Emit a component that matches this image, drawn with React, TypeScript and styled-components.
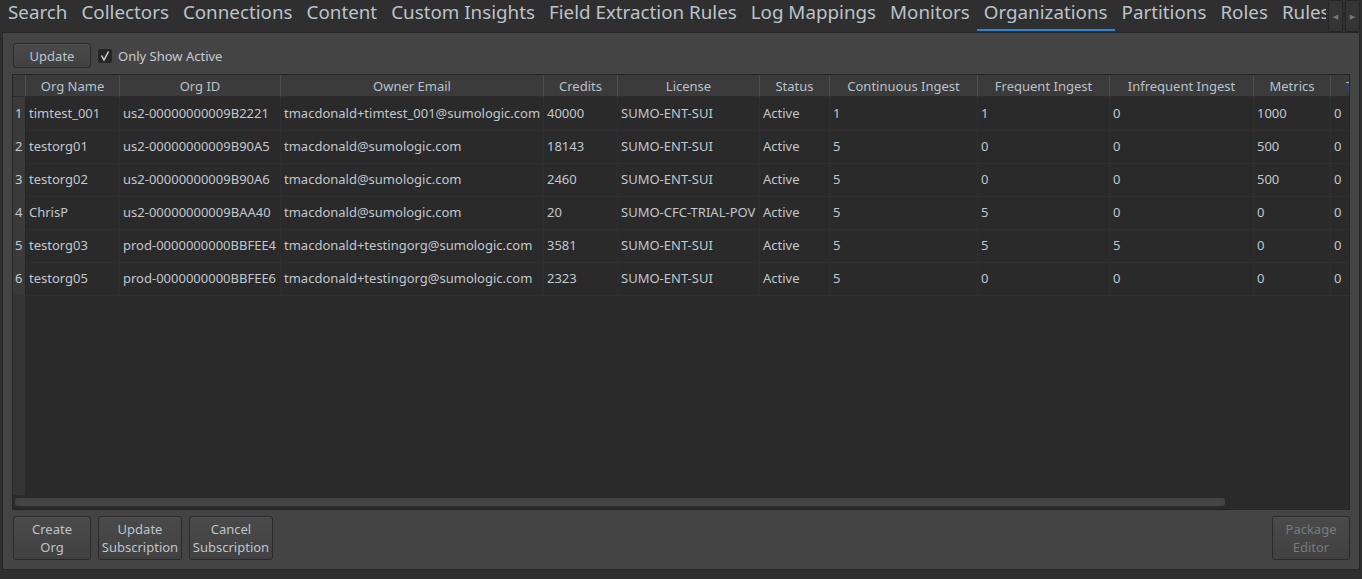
import { createGlobalStyle, styled } from "styled-components";

const GlobalStyle = createGlobalStyle`
  html, body {
    margin: 0;
    padding: 0;
    background: #2f2f2f;
  }
  body {
    font-family: "Noto Sans", "DejaVu Sans", sans-serif;
    color: #c4cad1;
  }
`;

const Window = styled.div`
  width: 1362px;
  height: 579px;
  display: flex;
  flex-direction: column;
  background: #2f2f2f;
  overflow: hidden;
`;

const TabBar = styled.div`
  height: 32px;
  display: flex;
  align-items: stretch;
  padding-left: 1px;
`;

const TabStrip = styled.div`
  flex: 1;
  display: flex;
  overflow: hidden;
  white-space: nowrap;
`;

const Tab = styled.div<{ $active?: boolean }>`
  padding: 0 7px;
  font-size: 18.8px;
  line-height: 25px;
  color: #bac3cc;
  flex-shrink: 0;
  border-bottom: 2px solid ${({ $active }) => ($active ? "#2f86d6" : "transparent")};
  height: 29px;
`;

const ArrowButton = styled.div`
  width: 13px;
  height: 30px;
  margin-left: 2px;
  border: 1px solid #262626;
  border-radius: 2px;
  background: #353535;
  display: flex;
  align-items: center;
  justify-content: center;
  color: #777;
  font-size: 7px;
`;

const Arrows = styled.div`
  display: flex;
  padding-right: 2px;
`;

const Pane = styled.div`
  flex: 1;
  margin: 0 2px 9px 2px;
  border: 1px solid #262626;
  background: #444444;
  padding: 10px 9px 9px 9px;
  display: flex;
  flex-direction: column;
`;

const Toolbar = styled.div`
  display: flex;
  align-items: stretch;
  gap: 7px;
  padding-left: 1px;
  height: 25px;
  margin-bottom: 6px;
`;

const Button = styled.button<{ $disabled?: boolean; $width?: number }>`
  font-family: "Noto Sans", "DejaVu Sans", sans-serif;
  font-size: 13px;
  line-height: 18px;
  color: ${({ $disabled }) => ($disabled ? "#767b80" : "#bcc4cc")};
  background: linear-gradient(#4a4a4a, #414141);
  border: 1px solid #2a2a2a;
  border-radius: 3px;
  width: ${({ $width }) => $width ?? 78}px;
  padding: 0;
  box-shadow: inset 0 1px 0 #505050;
`;

const CheckLabel = styled.label`
  display: flex;
  align-items: center;
  gap: 6px;
  font-size: 13px;
  color: #c4cad1;
`;

const CheckBox = styled.span`
  width: 14px;
  height: 14px;
  background: #262626;
  border-radius: 2px;
  display: flex;
  align-items: center;
  justify-content: center;
`;

const Table = styled.div`
  flex: 1;
  border: 1px solid #262626;
  background: #2a2a2a;
  display: flex;
  flex-direction: column;
  overflow: hidden;
`;

const Columns = "13px 94px 161px 263px 74px 142px 70px 148px 132px 144px 77px 70px";

const HeaderRow = styled.div`
  display: grid;
  grid-template-columns: ${Columns};
  height: 22px;
  background: #3b3b3b;
  flex-shrink: 0;
`;

const HeaderCell = styled.div`
  font-size: 13px;
  line-height: 22px;
  text-align: center;
  color: #b9c1c9;
  border-right: 1px solid #4f4f4f;
  border-bottom: 1px solid #2c2c2c;
  white-space: nowrap;
  overflow: hidden;
`;

const Body = styled.div`
  flex: 1;
  display: flex;
  flex-direction: column;
`;

const Row = styled.div`
  display: grid;
  grid-template-columns: ${Columns};
  height: 33px;
`;

const RowHeader = styled.div`
  background: #3a3a3a;
  border-right: 1px solid #262626;
  border-bottom: 1px solid #2c2c2c;
  font-size: 13px;
  line-height: 33px;
  padding-left: 2px;
  color: #c4cad1;
`;

const Cell = styled.div`
  font-size: 13px;
  line-height: 33px;
  padding-left: 3px;
  white-space: nowrap;
  overflow: hidden;
  border-right: 1px solid #2e2e2e;
  border-bottom: 1px solid #2f2f2f;
  color: #c1c7ce;
`;

const Filler = styled.div`
  flex: 1;
  display: grid;
  grid-template-columns: 13px 1fr;
`;

const FillerHeader = styled.div`
  background: #353535;
  border-right: 1px solid #2c2c2c;
`;

const ScrollTrack = styled.div`
  height: 14px;
  display: flex;
  align-items: center;
  padding: 0 2px;
  flex-shrink: 0;
`;

const ScrollHandle = styled.div`
  height: 8px;
  width: 1210px;
  background: #454545;
  border-radius: 3px;
`;

const Footer = styled.div`
  display: flex;
  gap: 7px;
  margin-top: 6px;
  padding-left: 1px;
  height: 44px;
`;

const Spacer = styled.div`
  flex: 1;
`;

const tabs = [
  "Search",
  "Collectors",
  "Connections",
  "Content",
  "Custom Insights",
  "Field Extraction Rules",
  "Log Mappings",
  "Monitors",
  "Organizations",
  "Partitions",
  "Roles",
  "Rules",
];

const headers = [
  "Org Name",
  "Org ID",
  "Owner Email",
  "Credits",
  "License",
  "Status",
  "Continuous Ingest",
  "Frequent Ingest",
  "Infrequent Ingest",
  "Metrics",
  "Traces",
];

const rows = [
  ["timtest_001", "us2-00000000009B2221", "tmacdonald+timtest_001@sumologic.com", "40000", "SUMO-ENT-SUI", "Active", "1", "1", "0", "1000", "0"],
  ["testorg01", "us2-00000000009B90A5", "tmacdonald@sumologic.com", "18143", "SUMO-ENT-SUI", "Active", "5", "0", "0", "500", "0"],
  ["testorg02", "us2-00000000009B90A6", "tmacdonald@sumologic.com", "2460", "SUMO-ENT-SUI", "Active", "5", "0", "0", "500", "0"],
  ["ChrisP", "us2-00000000009BAA40", "tmacdonald@sumologic.com", "20", "SUMO-CFC-TRIAL-POV", "Active", "5", "5", "0", "0", "0"],
  ["testorg03", "prod-0000000000BBFEE4", "tmacdonald+testingorg@sumologic.com", "3581", "SUMO-ENT-SUI", "Active", "5", "5", "5", "0", "0"],
  ["testorg05", "prod-0000000000BBFEE6", "tmacdonald+testingorg@sumologic.com", "2323", "SUMO-ENT-SUI", "Active", "5", "0", "0", "0", "0"],
];

export default function App() {
  return (
    <>
      <GlobalStyle />
      <Window>
        <TabBar>
          <TabStrip>
            {tabs.map((t) => (
              <Tab key={t} $active={t === "Organizations"}>
                {t}
              </Tab>
            ))}
          </TabStrip>
          <Arrows>
            <ArrowButton>◀</ArrowButton>
            <ArrowButton>▶</ArrowButton>
          </Arrows>
        </TabBar>
        <Pane>
          <Toolbar>
            <Button>Update</Button>
            <CheckLabel>
              <CheckBox>
                <svg width="12" height="12" viewBox="0 0 12 12">
                  <path d="M2.5 5.5 L5 10 L9.5 1.5" fill="none" stroke="#d8dde2" strokeWidth="1.4" />
                </svg>
              </CheckBox>
              Only Show Active
            </CheckLabel>
          </Toolbar>
          <Table>
            <HeaderRow>
              <HeaderCell />
              {headers.map((h) => (
                <HeaderCell key={h}>{h}</HeaderCell>
              ))}
            </HeaderRow>
            <Body>
              {rows.map((r, i) => (
                <Row key={i}>
                  <RowHeader>{i + 1}</RowHeader>
                  {r.map((c, j) => (
                    <Cell key={j}>{c}</Cell>
                  ))}
                </Row>
              ))}
              <Filler>
                <FillerHeader />
                <div />
              </Filler>
            </Body>
            <ScrollTrack>
              <ScrollHandle />
            </ScrollTrack>
          </Table>
          <Footer>
            <Button>
              Create
              <br />
              Org
            </Button>
            <Button $width={84}>
              Update
              <br />
              Subscription
            </Button>
            <Button $width={84}>
              Cancel
              <br />
              Subscription
            </Button>
            <Spacer />
            <Button $disabled>
              Package
              <br />
              Editor
            </Button>
          </Footer>
        </Pane>
      </Window>
    </>
  );
}
